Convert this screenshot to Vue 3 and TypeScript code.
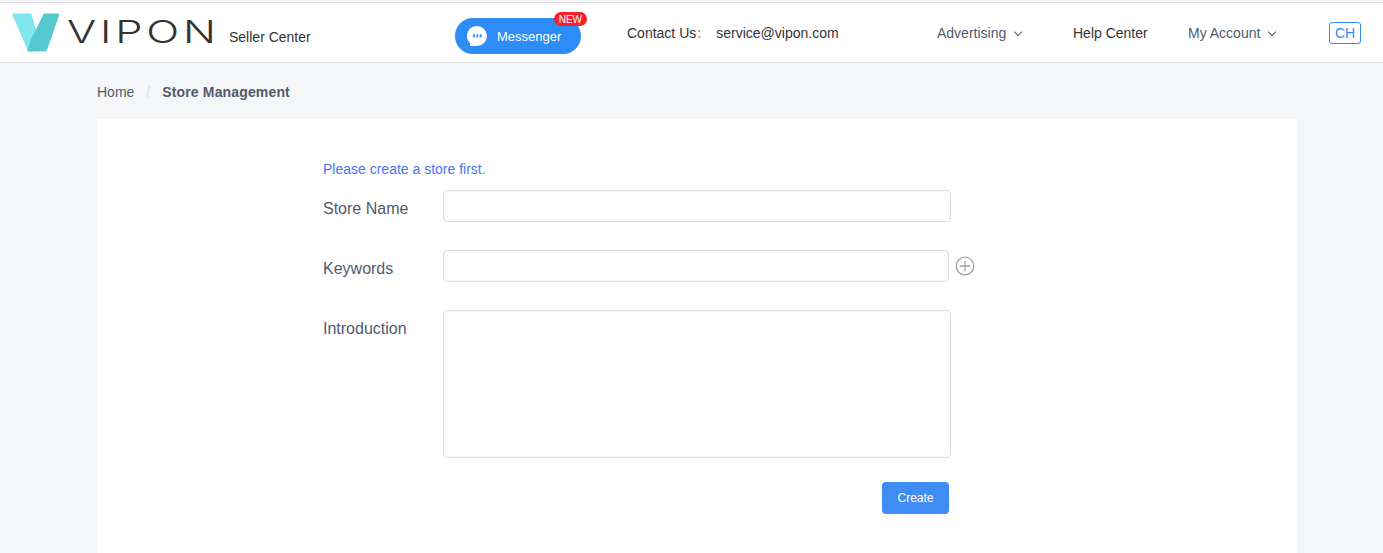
<template>
  <div class="page">
    <header class="header">
      <div class="brand">
        <svg class="logo-mark" width="48" height="39" viewBox="0 0 48 39">
          <path d="M.5 2C.2 1 .8 .5 1.800 .5H18C19 .5 19.500 1 19.800 2L26 24L20 38.500H19C17 38.500 16 38 15.500 37Z" fill="#7fe6ee" />
          <path d="M33 .5H45.500C46.800 .5 47.400 1.400 47 2.500L35.200 36.500C34.700 37.900 34 38.500 32.500 38.500H16.500C15.500 38.500 15.200 38 15.500 37.200L19 26C19.500 24.500 20 24 21 22.500L31 2C31.500 1 32 .5 33 .5Z" fill="#55c9ce" />
        </svg>
        <span class="wordmark">VIPON</span>
        <span class="brand-sub">Seller Center</span>
      </div>

      <a class="messenger">
        <svg class="msg-icon" width="20" height="20" viewBox="0 0 20 20">
          <path d="M10 0a10 10 0 0 1 0 20H3.500C2.500 20 3.400 18.300 2.600 16.700A10 10 0 0 1 10 0Z" fill="#fff" />
          <path d="M6.400 8.200h1.800l-.6 3.200H5.800ZM9.700 8.200h1.800l-.6 3.200H9.100ZM13 8.200h1.800l-.6 3.200h-1.800Z" fill="#2d8cf5" />
        </svg>
        <span>Messenger</span>
        <span class="new-badge">NEW</span>
      </a>

      <div class="contact">
        <span>Contact Us<i class="colon">：</i></span>
        <span>service@vipon.com</span>
      </div>

      <nav class="nav">
        <a class="nav-item muted adv">Advertising <i class="chev"></i></a>
        <a class="nav-item help">Help Center</a>
        <a class="nav-item muted account">My Account <i class="chev"></i></a>
        <a class="lang">CH</a>
      </nav>
    </header>

    <div class="crumbs">
      <span class="crumb-home">Home</span>
      <span class="crumb-sep">/</span>
      <span class="crumb-current">Store Management</span>
    </div>

    <main class="card">
      <p class="notice">Please create a store first.</p>
      <div class="row">
        <label>Store Name</label>
        <input class="field" type="text" />
      </div>
      <div class="row">
        <label>Keywords</label>
        <input class="field short" type="text" />
        <svg class="add" width="20" height="20" viewBox="0 0 20 20">
          <circle cx="10" cy="10" r="8.800" fill="none" stroke="#a3a3a3" stroke-width="1.300" />
          <path d="M10 4.800v10.400M4.800 10h10.400" stroke="#a3a3a3" stroke-width="1.300" />
        </svg>
      </div>
      <div class="row">
        <label>Introduction</label>
        <textarea class="field area"></textarea>
      </div>
      <div class="actions">
        <button class="create" type="button">Create</button>
      </div>
    </main>
  </div>
</template>

<script setup lang="ts">
</script>

<style>
html, body {
  margin: 0;
  background: #f5f6f8;
}
</style>

<style scoped>
.page {
  height: 553px;
  overflow: hidden;
  background: #f5f6f8;
  font-family: "Liberation Sans", "Noto Sans CJK SC", sans-serif;
  font-size: 14px;
  color: #333;
}

.header {
  display: flex;
  align-items: center;
  height: 59px;
  margin-top: 2px;
  background: #fff;
  border-top: 1px solid #dfdfe6;
  border-bottom: 1px solid #dfdfe6;
}

.brand {
  display: flex;
  align-items: center;
  width: 455px;
  padding-left: 12px;
  box-sizing: border-box;
}

.logo-mark {
  flex-shrink: 0;
}

.wordmark {
  width: 149px;
  margin-left: 7px;
  margin-top: -2px;
  font-family: Inter, "Liberation Sans", sans-serif;
  font-size: 31px;
  font-weight: 350;
  line-height: 32px;
  letter-spacing: 2.700px;
  color: #333;
  transform: scaleX(1.4);
  transform-origin: left center;
}

.brand-sub {
  margin-left: 13px;
  margin-top: 9px;
  color: #333;
  white-space: nowrap;
}

.messenger {
  position: relative;
  display: flex;
  align-items: center;
  gap: 10px;
  width: 126px;
  height: 36px;
  padding-left: 12px;
  box-sizing: border-box;
  margin-top: 7px;
  border-radius: 18px;
  background: #2d8cf5;
  color: #fff;
  font-size: 13px;
}

.new-badge {
  position: absolute;
  top: -6px;
  right: -6px;
  height: 14px;
  padding: 0 5px;
  border-radius: 7px;
  background: #f5222d;
  font-size: 10px;
  line-height: 15px;
}

.contact {
  display: flex;
  gap: 4px;
  width: 310px;
  margin-left: 46px;
  line-height: 20px;
}

.colon {
  font-style: normal;
  font-size: 12px;
  line-height: 1;
  color: #777;
  margin-right: 4px;
}

.nav {
  display: flex;
  align-items: center;
}

.nav-item {
  white-space: nowrap;
}

.muted {
  color: #515a6e;
}

.adv {
  width: 136px;
}

.help {
  width: 115px;
}

.account {
  width: 141px;
}

.chev {
  display: inline-block;
  width: 5px;
  height: 5px;
  margin: 0 0 3px 5px;
  border-right: 1px solid #515a6e;
  border-bottom: 1px solid #515a6e;
  transform: rotate(45deg);
}

.lang {
  width: 32px;
  height: 22px;
  margin-top: 1px;
  box-sizing: border-box;
  border: 1px solid #2d8cf5;
  border-radius: 3px;
  color: #2d8cf5;
  line-height: 20px;
  text-align: center;
}

.crumbs {
  display: flex;
  align-items: center;
  height: 55px;
  padding-top: 1px;
  padding-left: 97px;
  color: #515a6e;
}

.crumb-sep {
  margin: 0 12px;
  color: #d5d8de;
}

.crumb-current {
  font-weight: 700;
  letter-spacing: .15px;
}

.card {
  width: 1200px;
  height: 500px;
  margin-left: 97px;
  padding: 42px 0 0 226px;
  box-sizing: border-box;
  background: #fff;
}

.notice {
  margin: 0 0 13px;
  color: #4a74f5;
  line-height: 16px;
}

.row {
  display: flex;
  align-items: flex-start;
  margin-bottom: 24px;
}

.row label {
  width: 120px;
  height: 36px;
  padding-top: 1px;
  box-sizing: border-box;
  color: #515a6e;
  font-size: 16px;
  line-height: 36px;
}

.field {
  display: block;
  width: 508px;
  height: 32px;
  padding: 0 10px;
  box-sizing: border-box;
  border: 1px solid #dcdcdc;
  border-radius: 4px;
  background: #fff;
  outline: none;
  resize: none;
}

.short {
  width: 506px;
}

.area {
  height: 148px;
}

.add {
  margin-left: 6px;
  margin-top: 6px;
}

.actions {
  display: flex;
  justify-content: flex-end;
  width: 626px;
}

.create {
  width: 67px;
  height: 32px;
  border: 0;
  border-radius: 4px;
  background: #3f8cf3;
  color: #fff;
  font-family: inherit;
  font-size: 12px;
}
</style>
